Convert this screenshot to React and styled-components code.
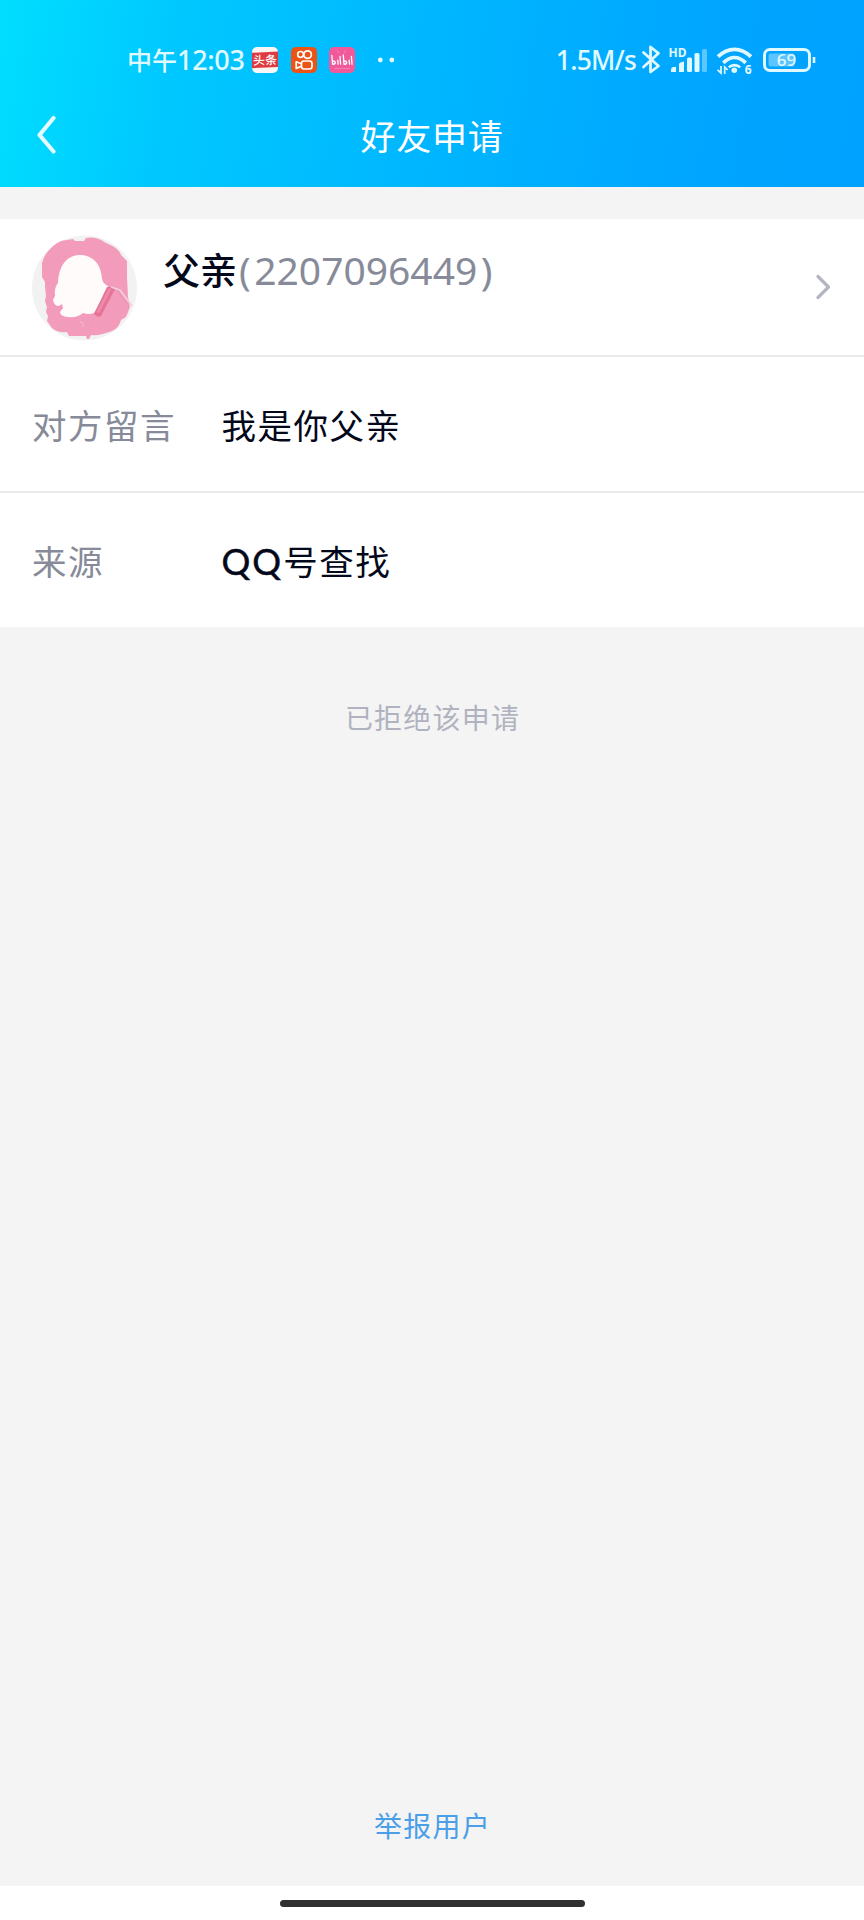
import React from 'react'
import styled, { createGlobalStyle } from 'styled-components'

const GlobalStyle = createGlobalStyle`
  * { box-sizing: border-box; }
  body {
    margin: 0;
    background: #f4f4f4;
    font-family: "Noto Sans CJK SC", "Noto Sans", sans-serif;
  }
`

const Page = styled.div`
  display: flex;
  flex-direction: column;
  width: 864px;
  height: 1920px;
  overflow: hidden;
  background: #f4f4f4;
`

const Header = styled.header`
  display: flex;
  flex-direction: column;
  height: 187px;
  color: #fff;
  background: linear-gradient(99deg, #00deff 0%, #00c8ff 20%, #00b6ff 50%, #00a5ff 82%, #00a2ff 100%);
`

const StatusBar = styled.div`
  display: flex;
  align-items: center;
  height: 60px;
  margin-top: 30px;
  padding: 0 48px 0 127px;
  color: #e0f9ff;
`

const Clock = styled.div`
  display: flex;
  align-items: center;
  width: 125px;
  padding-bottom: 1px;
  font-size: 25px;
  line-height: 59px;
  font-weight: 500;
`

const Digits = styled.span`
  font-family: "Noto Sans", sans-serif;
  font-size: ${p => p.$size || '27px'};
  font-weight: 500;
  letter-spacing: ${p => p.$spacing || '0'};
`

const AppIcons = styled.div`
  display: flex;
  align-items: center;
  gap: 12.5px;
  svg { display: block; }
`

const Signals = styled.div`
  display: flex;
  align-items: center;
  gap: 4px;
  margin-left: auto;
  svg { display: block; }
`

const TitleBar = styled.div`
  display: grid;
  grid-template-columns: 80px 1fr 80px;
  align-items: center;
  height: 92px;
  padding-bottom: 3px;
`

const BackButton = styled.button`
  justify-self: start;
  padding: 0 0 0 36.5px;
  border: 0;
  background: none;
  line-height: 0;
`

const Title = styled.h1`
  margin: 0;
  text-align: center;
  font-size: 35px;
  font-weight: 400;
  line-height: 50px;
  letter-spacing: 0.8px;
`

const Card = styled.section`
  margin-top: 32px;
  background: #fff;
`

const Profile = styled.div`
  display: flex;
  align-items: flex-start;
  height: 138px;
  padding: 16px 32px 0;
  border-bottom: 2px solid #e9e9eb;
`

const Name = styled.div`
  flex: 1;
  display: flex;
  align-items: baseline;
  margin-left: 25px;
  padding-top: 7px;
  font-size: 37px;
  line-height: 54px;
  font-weight: 500;
  color: #03081a;
`

const Account = styled.span`
  display: flex;
  gap: 3.5px;
  margin-left: 2px;
  font-family: "Noto Sans", sans-serif;
  font-size: 39px;
  line-height: 52px;
  font-weight: 400;
  color: #878b99;
`

const Arrow = styled.svg`
  margin-top: 37px;
`

const Row = styled.div`
  display: flex;
  align-items: center;
  height: ${p => (p.$last ? '134px' : '136px')};
  padding: 0 32px 1px;
  border-bottom: ${p => (p.$last ? '0' : '2px solid #e9e9eb')};
  font-size: 34.5px;
  letter-spacing: 1.5px;
`

const Label = styled.span`
  width: 189.5px;
  color: #878b99;
`

const Value = styled.span`
  color: #03081a;
`

const Latin = styled.span`
  font-family: Lato, sans-serif;
  font-size: 36px;
  letter-spacing: 2px;
  -webkit-text-stroke: 0.5px;
`

const Notice = styled.p`
  margin: 69px 0 0;
  text-align: center;
  font-size: 28px;
  line-height: 42px;
  letter-spacing: 1.2px;
  text-indent: 1px;
  color: #b0b3bf;
`

const Report = styled.a`
  margin-top: auto;
  padding-bottom: 40px;
  text-align: center;
  font-size: 28px;
  line-height: 42px;
  letter-spacing: 1.2px;
  text-indent: 1px;
  color: #4a9fe8;
`

const HomeBar = styled.footer`
  display: flex;
  justify-content: center;
  height: 34px;
  padding-top: 14px;
  background: #fff;
  &::after {
    content: '';
    width: 305px;
    height: 7px;
    border-radius: 4px;
    background: #303030;
  }
`

const Toutiao = () => (
  <svg width="26" height="26" viewBox="0 0 26 26">
    <rect width="26" height="26" rx="5" fill="#fbf5f4" />
    <path d="M0 5.8L26 4.6V20L0 21.2Z" fill="#dd3b40" />
    <text x="13" y="17.4" textAnchor="middle" fontSize="11.8" fontWeight="500" fill="#fff" transform="rotate(-2 13 13)">头条</text>
  </svg>
)

const Kuaishou = () => (
  <svg width="26" height="26" viewBox="0 0 26 26">
    <rect width="26" height="26" rx="5" fill="#ee5316" />
    <g fill="none" stroke="#fff" strokeWidth="1.7" strokeLinejoin="round">
      <circle cx="9.6" cy="7.4" r="2.9" />
      <circle cx="16.6" cy="7.6" r="3.8" />
      <rect x="10.5" y="14" width="10.5" height="8" rx="2.4" />
      <path d="M10.5 16.8L5.2 14.8V21.4L10.5 19.3" />
    </g>
  </svg>
)

const Bilibili = () => (
  <svg width="26" height="26" viewBox="0 0 26 26">
    <rect width="26" height="26" rx="5" fill="#f2599a" />
    <path d="M8 3.5L10 6M17 3.5L15 6M5 21.5H21" stroke="#f57fb2" strokeWidth="1.1" />
    <g fill="none" stroke="#fff" strokeWidth="1.3" strokeLinecap="round" strokeLinejoin="round">
      <path d="M2.8 8.5L3.6 17.3C7 17.3 7.4 13.8 3.8 14M8.8 13.2L9.1 17.2M11 9.5L11.6 17.2" />
      <path d="M14.3 8L15 17.3C18.4 17.3 18.8 13.8 15.2 14M20.2 13.2L20.5 17.2M22.4 9.5L23 17.2" />
    </g>
  </svg>
)

const Dots = () => (
  <svg width="30" height="26" viewBox="0 0 30 26" fill="#e0f9ff">
    <circle cx="12.3" cy="13" r="2.4" />
    <circle cx="23.8" cy="13" r="2.4" />
  </svg>
)

// bluetooth, mobile signal, wifi and battery share one strip
const StatusIcons = () => (
  <svg width="176" height="36" viewBox="640 42 176 36" fill="none" stroke="#e0f9ff">
    <path d="M643.5 52.5L658.5 66L650.5 72V47L658.5 53.3L643.5 67" strokeWidth="2.8" strokeLinejoin="round" strokeLinecap="round" />
    <g fill="#e0f9ff" stroke="none">
      <text x="668.5" y="56.7" fontFamily="Noto Sans" fontSize="12" fontWeight="700">HD</text>
      <path d="M671 72V69.5Q671 67.5 673 67H676V72Z" />
      <path d="M679 72V64.5Q679 63 680.5 62.5L684 61.5V72Z" />
      <rect x="687" y="57.5" width="5" height="14.5" rx="1.5" />
      <rect x="694.5" y="53" width="5" height="19" rx="1.5" />
      <rect x="702" y="49" width="5" height="23" rx="1.5" opacity="0.4" />
    </g>
    <path d="M718 56.7C728 46.8 741 46.8 751 56.7" strokeWidth="3.8" />
    <path d="M723.3 62.8C730.5 55.8 738.5 55.8 745.7 62.8" strokeWidth="3.7" />
    <path d="M728.8 67.4C732 64.4 737 64.4 740.2 67.4" strokeWidth="2.6" />
    <circle cx="734.3" cy="70.2" r="2.8" fill="#e0f9ff" stroke="none" />
    <path d="M717.5 69.8L721 73V66M724.7 74V67L727.7 70" strokeWidth="1.7" />
    <text x="744.8" y="74" fontFamily="Noto Sans" fontSize="12" fontWeight="700" fill="#e0f9ff" stroke="none">6</text>
    <rect x="764.5" y="49.5" width="45" height="21" rx="5.5" strokeWidth="3" />
    <rect x="768.5" y="53.5" width="26" height="13" rx="2" fill="#5cc4ff" stroke="none" />
    <path d="M814 57V63" strokeWidth="2.6" />
    <text x="786.5" y="66" textAnchor="middle" fontFamily="Noto Sans" fontSize="17" fontWeight="500" fill="#e0f9ff" stroke="none">69</text>
  </svg>
)

const Avatar = () => (
  <svg width="106" height="106" viewBox="32 234 106 106">
    <circle cx="84.5" cy="287" r="52.5" fill="#f2f2f3" />
    <path d="M42 262Q44 253 53 245Q60 239 67 239L73 238L75 240L84 240L86 237Q96 235 106 242Q119 247 121 254L127 260L127 276L128 296L130 306L126 316L121 319Q119 327 112 330Q100 335 91 334L89 338L87 338L86 335L69 335L67 331Q57 332 52 327L47 320L48 315L46 311L47 306L45 300L46 295L45 286L45 281L42 276Z" fill="#f39bbb" />
    <path d="M80 254C92 254 100 262 101.500 274Q102 281 105 283L109 286L94 312Q88 314 83 312Q78 317 67 316Q60 315 60 311L63 307L62 303L59 305Q54 305 53 299Q54 297 55 295Q54 287 58 282C59 263 68 254 80 254Z" fill="#fffbfa" />
    <path d="M107 286Q112 285 115 288L101 315Q98 317 94 313Z" fill="#e67496" />
    <path d="M109 287L111.500 288L99 312L96.500 311Z" fill="#ee8aaa" />
    <path d="M111 286L120 289L132 305" fill="none" stroke="#f1cfda" strokeWidth="1.8" strokeLinejoin="round" />
    <path d="M117 290L128 304" fill="none" stroke="#dd91aa" strokeWidth="0.8" />
    <path d="M80 321L83 322L83 326" fill="none" stroke="#f6b3ca" strokeWidth="1.2" />
  </svg>
)

export default function App() {
  return (
    <>
      <GlobalStyle />
      <Page>
        <Header>
          <StatusBar>
            <Clock>中午<Digits $spacing="-0.3px">12:03</Digits></Clock>
            <AppIcons>
              <Toutiao />
              <Kuaishou />
              <Bilibili />
              <Dots />
            </AppIcons>
            <Signals>
              <Digits $size="26.5px" $spacing="-0.8px">1.5M/s</Digits>
              <StatusIcons />
            </Signals>
          </StatusBar>
          <TitleBar>
            <BackButton aria-label="返回">
              <svg width="22" height="40" viewBox="0 0 22 40" fill="none">
                <path d="M16.5 3L2.500 20L16.500 36.500" stroke="#e6fbff" strokeWidth="4.2" strokeLinecap="round" strokeLinejoin="round" />
              </svg>
            </BackButton>
            <Title>好友申请</Title>
          </TitleBar>
        </Header>
        <Card>
          <Profile>
            <Avatar />
            <Name>
              父亲
              <Account>
                <span>(</span>
                <span>2207096449</span>
                <span>)</span>
              </Account>
            </Name>
            <Arrow width="18" height="28" viewBox="0 0 18 28" fill="none">
              <path d="M4 4.500L14.500 15L4 25.500" stroke="#b3b5c1" strokeWidth="3.2" strokeLinecap="round" strokeLinejoin="round" />
            </Arrow>
          </Profile>
          <Row>
            <Label>对方留言</Label>
            <Value>我是你父亲</Value>
          </Row>
          <Row $last>
            <Label>来源</Label>
            <Value><Latin>QQ</Latin>号查找</Value>
          </Row>
        </Card>
        <Notice>已拒绝该申请</Notice>
        <Report>举报用户</Report>
        <HomeBar />
      </Page>
    </>
  )
}
